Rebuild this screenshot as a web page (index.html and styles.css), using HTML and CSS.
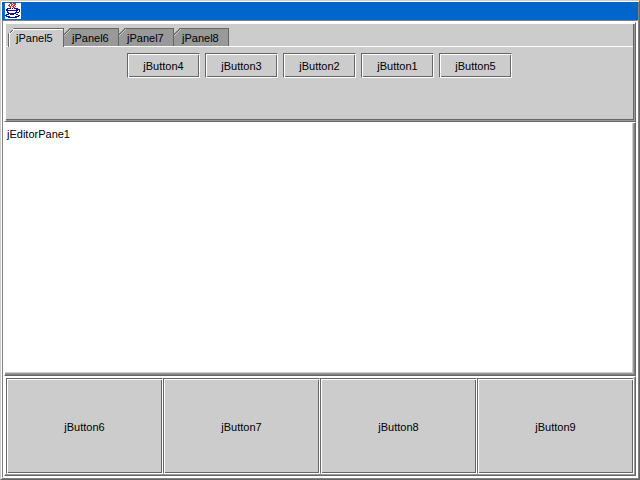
FILE: index.html
```
<!DOCTYPE html>
<html lang="en">
<head>
  <meta charset="UTF-8">
  <meta name="viewport" content="width=device-width, initial-scale=1.0">
  <title>Java Frame</title>
  <link rel="stylesheet" href="styles.css">
</head>
<body>
  <div class="frame">
    <header class="title-bar">
      <svg class="java-icon" width="16" height="16" viewBox="0 0 16 16" fill="none" shape-rendering="crispEdges">
        <rect width="16" height="16" fill="#fff"/>
        <path d="M5 0.500h2M8 0.500h3M4 1.500h1M6 1.500h2M9 1.500h2M3 2.500h2M6 2.500h1M8 2.500h2M4 3.500h2M7 3.500h2M10 3.500h1M5 4.500h1M8 4.500h2" stroke="#ee2222"/>
        <path d="M2 5.500h4M7 5.500h1M9 5.500h4M1 6.500h2M11 6.500h4M1 7.500h12M14 7.500h1M2 8.500h1M11 8.500h1M14 8.500h1M2 9.500h2M10 9.500h4M3 10.500h8M1 11.500h3M5 11.500h4M11 11.500h2M0 12.500h2M13 12.500h2M1 13.500h4M10 13.500h4M3 14.500h9" stroke="#101090"/>
      </svg>
    </header>
    <main class="content">
      <section class="tabbed-pane">
        <div class="tabs" role="tablist">
          <button class="tab active" role="tab" aria-selected="true">jPanel5</button>
          <button class="tab" role="tab">jPanel6</button>
          <button class="tab" role="tab">jPanel7</button>
          <button class="tab" role="tab">jPanel8</button>
        </div>
        <div class="tab-panel" role="tabpanel">
          <button class="btn">jButton4</button>
          <button class="btn">jButton3</button>
          <button class="btn">jButton2</button>
          <button class="btn">jButton1</button>
          <button class="btn">jButton5</button>
        </div>
      </section>
      <textarea class="editor" aria-label="Editor" spellcheck="false">jEditorPane1</textarea>
      <section class="bottom-panel">
        <button class="btn">jButton6</button>
        <button class="btn">jButton7</button>
        <button class="btn">jButton8</button>
        <button class="btn">jButton9</button>
      </section>
    </main>
  </div>
</body>
</html>
```
FILE: styles.css
```
:root {
  --face: #cccccc;
  --dark: #666666;
  --mid: #999999;
  --title: #0066cc;
}
* {
  box-sizing: border-box;
}
body {
  margin: 0;
  font-family: "Liberation Sans", Arial, sans-serif;
  font-size: 11px;
  color: #000;
}
button, textarea {
  font: inherit;
  color: inherit;
  border-radius: 0;
}
.frame {
  height: 100vh;
  display: flex;
  flex-direction: column;
  border: 1px solid;
  border-color: var(--face) var(--dark) var(--dark) var(--face);
  box-shadow: inset 1px 1px #fff, inset -1px -1px #808080;
  padding: 1px;
}
.title-bar {
  height: 18px;
  flex: none;
  background: var(--title);
  padding: 1px 3px;
}
.java-icon {
  display: block;
}
.content {
  flex: 1;
  min-height: 0;
  display: flex;
  flex-direction: column;
  border: 1px solid;
  border-color: #808080 #fff #fff #808080;
  padding: 1px;
  background: #fff;
}

/* raised panels with a stepped shadow */
.tabbed-pane, .editor, .bottom-panel {
  border: 1px solid;
  border-color: #fff var(--dark) var(--dark) #fff;
}
.tabbed-pane {
  height: 100px;
  flex: none;
  display: flex;
  flex-direction: column;
  background: var(--face);
  box-shadow: inset 1px 1px #fff, inset -1px -1px var(--mid), inset -2px -2px var(--dark);
  padding: 1px 2px 2px 1px;
}
.tabs {
  display: flex;
  padding: 4px 2px 0;
  box-shadow: inset 0 -1px #fff;
}
.tab {
  width: 55px;
  height: 18px;
  border: 0;
  padding: 1px 0 0 8px;
  text-align: left;
  background: linear-gradient(135deg, var(--dark) 5px, var(--face) 5px, var(--face) 6px, transparent 6px), var(--mid);
  box-shadow: inset -1px 1px var(--dark);
  clip-path: polygon(0 6px, 6px 0, 100% 0, 100% 100%, 0 100%);
  margin-bottom: 1px;
}
.tab.active {
  width: 56px;
  height: 19px;
  margin-bottom: 0;
  background: linear-gradient(135deg, var(--dark) 5px, #fff 5px, #fff 6px, transparent 6px), var(--face);
  box-shadow: inset 1px 1px var(--dark), inset -1px 0 var(--dark), inset 2px 2px #fff;
}
.tab-panel {
  flex: 1;
  display: flex;
  justify-content: center;
  align-items: flex-start;
  gap: 5px;
  padding-top: 6px;
}
.btn {
  background: var(--face);
  border: 1px solid;
  border-color: var(--dark) #fff #fff var(--dark);
  box-shadow: inset 1px 1px #fff, inset -1px -1px var(--dark);
  padding: 0;
}
.tab-panel .btn {
  width: 73px;
  height: 25px;
}
.editor {
  flex: 1;
  min-height: 0;
  width: 100%;
  display: block;
  resize: none;
  outline: none;
  background: #fff;
  box-shadow: inset -1px -1px #808080, inset -2px -2px var(--mid), inset -3px -3px var(--face);
  padding: 5px 4px 4px 2px;
}
.bottom-panel {
  height: 100px;
  flex: none;
  display: grid;
  grid-template-columns: repeat(4, 1fr);
  box-shadow: inset -1px -1px var(--mid);
  padding: 1px;
  background: #fff;
}
.bottom-panel .btn {
  padding-top: 2px;
}
```
